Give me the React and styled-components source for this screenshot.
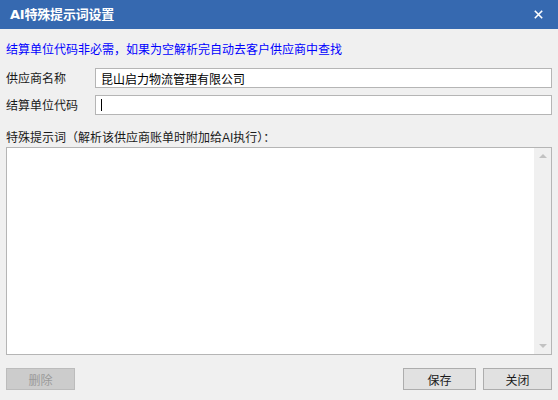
import React, { useState } from "react"
import styled, { createGlobalStyle } from "styled-components"

const GlobalStyle = createGlobalStyle`
  html, body {
    margin: 0;
    padding: 0;
    background: #f0f0f0;
  }
  body {
    font-family: "Liberation Sans", "Noto Sans CJK SC", sans-serif;
    font-size: 12px;
  }
`

function App() {
  const [supplier, setSupplier] = useState("昆山启力物流管理有限公司")
  const [unitCode, setUnitCode] = useState("")
  const [prompt, setPrompt] = useState("")

  return (
    <>
      <GlobalStyle />
      <Dialog>
        <TitleBar>
          <Title>AI特殊提示词设置</Title>
          <CloseButton aria-label="关闭">
            <svg width="9" height="9" viewBox="0 0 9 9">
              <path d="M0.8 0.8 L8.2 8.2 M8.2 0.8 L0.8 8.2" stroke="#fff" strokeWidth="1.6" />
            </svg>
          </CloseButton>
        </TitleBar>
        <Body>
          <Notice>结算单位代码非必需，如果为空解析完自动去客户供应商中查找</Notice>
          <FormRow>
            <Label>供应商名称</Label>
            <TextInput value={supplier} onChange={(e) => setSupplier(e.target.value)} />
          </FormRow>
          <FormRow gap={7}>
            <Label>结算单位代码</Label>
            <InputWrap>
              <TextInput value={unitCode} onChange={(e) => setUnitCode(e.target.value)} />
              {unitCode === "" && <Caret />}
            </InputWrap>
          </FormRow>
          <PromptLabel>特殊提示词（解析该供应商账单时附加给AI执行）：</PromptLabel>
          <MemoBox>
            <Memo value={prompt} onChange={(e) => setPrompt(e.target.value)} />
            <ScrollTrack>
              <Arrow dir="up" />
              <Arrow dir="down" />
            </ScrollTrack>
          </MemoBox>
          <ButtonBar>
            <Button disabled width={69}>删除</Button>
            <Spacer />
            <Button width={73}>保存</Button>
            <Button width={69}>关闭</Button>
          </ButtonBar>
        </Body>
      </Dialog>
    </>
  )
}

export default App

const Dialog = styled.div`
  width: 558px;
  height: 400px;
  display: flex;
  flex-direction: column;
  background: #f0f0f0;
  overflow: hidden;
`
const TitleBar = styled.div`
  height: 29px;
  flex: none;
  background: #3669b0;
  display: flex;
  align-items: center;
  padding: 0 10px;
`
const Title = styled.div`
  flex: 1;
  color: #fff;
  font-size: 13px;
  font-weight: bold;
  font-family: "DejaVu Sans", "Noto Sans CJK SC", sans-serif;
  line-height: 29px;
  letter-spacing: -0.2px;
`
const CloseButton = styled.button`
  border: none;
  background: none;
  padding: 0;
  margin-right: 5px;
  width: 9px;
  height: 9px;
  display: flex;
  cursor: pointer;
`
const Body = styled.div`
  flex: 1;
  display: flex;
  flex-direction: column;
  padding: 10px 6px 10px 6px;
`
const Notice = styled.div`
  color: #0000ff;
  line-height: 20px;
  height: 20px;
  padding-top: 1px;
  margin-bottom: 8px;
`
const FormRow = styled.div`
  display: flex;
  align-items: center;
  height: 20px;
  margin-top: ${(p) => (p.gap ? p.gap + "px" : "0")};
`
const Label = styled.div`
  width: 89px;
  flex: none;
  color: #1a1a1a;
  line-height: 20px;
  padding-top: 2px;
`
const InputWrap = styled.div`
  position: relative;
  flex: 1;
  display: flex;
`
const TextInput = styled.input`
  flex: 1;
  height: 20px;
  box-sizing: border-box;
  border: 1px solid #b5b5b5;
  background: #fff;
  padding: 0 5px;
  font-family: "Liberation Sans", "Noto Sans CJK SC", sans-serif;
  font-size: 12px;
  color: #000;
  outline: none;
`
const Caret = styled.span`
  position: absolute;
  left: 6px;
  top: 4px;
  width: 1px;
  height: 12px;
  background: #000;
`
const PromptLabel = styled.div`
  line-height: 20px;
  height: 20px;
  margin-top: 12px;
  color: #1a1a1a;
  padding-top: 1px;
  margin-bottom: -1px;
`
const MemoBox = styled.div`
  height: 208px;
  box-sizing: border-box;
  border: 1px solid #b5b5b5;
  background: #fff;
  display: flex;
`
const Memo = styled.textarea`
  flex: 1;
  border: none;
  resize: none;
  outline: none;
  padding: 3px 5px;
  font-family: "Liberation Sans", "Noto Sans CJK SC", sans-serif;
  font-size: 12px;
  overflow: hidden;
`
const ScrollTrack = styled.div`
  width: 17px;
  flex: none;
  background: #f0f0f0;
  display: flex;
  flex-direction: column;
  justify-content: space-between;
  align-items: center;
  padding: 6px 0;
`
const Arrow = styled.span`
  width: 0;
  height: 0;
  border-left: 4px solid transparent;
  border-right: 4px solid transparent;
  ${(p) =>
    p.dir === "up"
      ? "border-bottom: 4px solid #c2c2c2;"
      : "border-top: 4px solid #c2c2c2;"}
`
const ButtonBar = styled.div`
  display: flex;
  gap: 7px;
  margin-top: 13px;
`
const Spacer = styled.div`
  flex: 1;
`
const Button = styled.button`
  width: ${(p) => p.width}px;
  height: 22px;
  box-sizing: border-box;
  border: 1px solid ${(p) => (p.disabled ? "#bcbcbc" : "#adadad")};
  background: ${(p) => (p.disabled ? "#cccccc" : "#e1e1e1")};
  color: ${(p) => (p.disabled ? "#9a9a9a" : "#1a1a1a")};
  font-family: "Liberation Sans", "Noto Sans CJK SC", sans-serif;
  font-size: 12px;
  padding: 0;
  cursor: ${(p) => (p.disabled ? "default" : "pointer")};
`
